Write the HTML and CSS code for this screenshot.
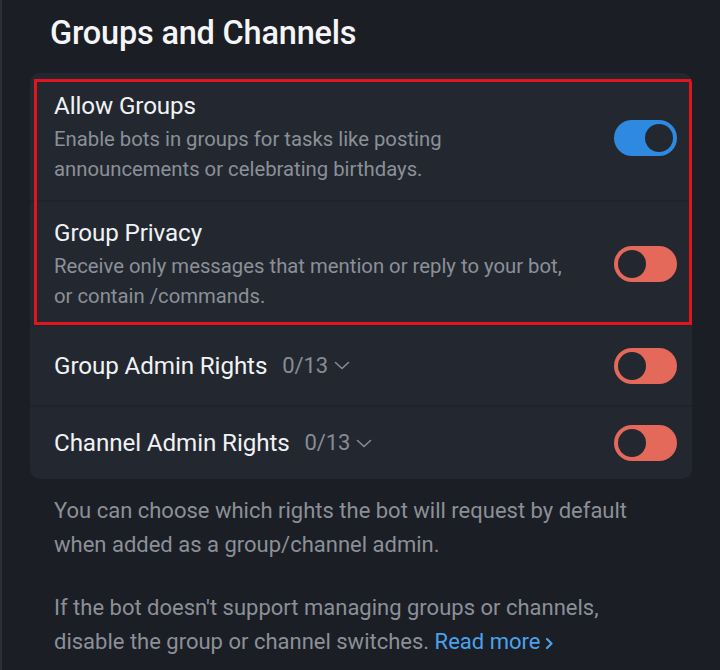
FILE: index.html
```html
<!DOCTYPE html>
<html lang="en">
<head>
<meta charset="utf-8">
<title>Groups and Channels</title>
<link rel="stylesheet" href="styles.css">
</head>
<body>
<main class="page">
  <h1 class="title">Groups and Channels</h1>
  <section class="card">
    <div class="highlight">
      <div class="row row-desc">
        <div class="text">
          <div class="label">Allow Groups</div>
          <div class="desc">Enable bots in groups for tasks like posting<br>announcements or celebrating birthdays.</div>
        </div>
        <span class="toggle on"><span class="knob"></span></span>
      </div>
      <div class="row row-desc">
        <div class="text">
          <div class="label">Group Privacy</div>
          <div class="desc">Receive only messages that mention or reply to your bot,<br>or contain /commands.</div>
        </div>
        <span class="toggle off"><span class="knob"></span></span>
      </div>
    </div>
    <div class="row row-simple">
      <div class="label">Group Admin Rights <span class="count">0/13<svg class="chev" viewBox="0 0 16 9" width="16" height="9"><path d="M1.5 1.5 L8 7.5 L14.5 1.5" fill="none" stroke="currentColor" stroke-width="1.6" stroke-linecap="round" stroke-linejoin="round"/></svg></span></div>
      <span class="toggle off"><span class="knob"></span></span>
    </div>
    <div class="row row-simple last">
      <div class="label">Channel Admin Rights <span class="count">0/13<svg class="chev" viewBox="0 0 16 9" width="16" height="9"><path d="M1.5 1.5 L8 7.5 L14.5 1.5" fill="none" stroke="currentColor" stroke-width="1.6" stroke-linecap="round" stroke-linejoin="round"/></svg></span></div>
      <span class="toggle off"><span class="knob"></span></span>
    </div>
  </section>
  <p class="note">You can choose which rights the bot will request by default<br>when added as a group/channel admin.</p>
  <p class="note">If the bot doesn't support managing groups or channels,<br>disable the group or channel switches. <a class="link" href="#">Read more<svg class="more" viewBox="0 0 8 12" width="8" height="13"><path d="M2 1.5 L6.5 6 L2 10.5" fill="none" stroke="currentColor" stroke-width="2.2" stroke-linecap="round" stroke-linejoin="round"/></svg></a></p>
</main>
</body>
</html>
```
FILE: styles.css
```css
html, body {
  margin: 0;
  padding: 0;
  background: #1b1e24;
}
body {
  font-family: Roboto, "Liberation Sans", sans-serif;
  color: #eef0f2;
  width: 720px;
  height: 670px;
  overflow: hidden;
}
.page {
  border-left: 2px solid #2c3036;
  padding: 0 28px 0 28px;
  height: 670px;
  box-sizing: border-box;
}
.title {
  margin: 0;
  padding: 13px 0 0 20px;
  height: 73px;
  box-sizing: border-box;
  font-size: 32.5px;
  line-height: 40px;
  font-weight: 500;
  color: #f4f5f7;
  letter-spacing: -0.2px;
}
.card {
  background: #1f232a;
  border-radius: 10px;
  overflow: hidden;
  display: flex;
  flex-direction: column;
  gap: 2px;
}
.highlight {
  position: relative;
  display: flex;
  flex-direction: column;
  gap: 2px;
}
.highlight::after {
  content: "";
  position: absolute;
  left: 4px;
  right: 0;
  top: 6px;
  bottom: -1px;
  border: 3px solid #e3151c;
  pointer-events: none;
}
.row {
  background: #232830;
  display: flex;
  align-items: center;
  justify-content: space-between;
  padding: 0 15px 0 24px;
}
.row-desc {
  height: 127px;
  box-sizing: border-box;
  padding-top: 18px;
  padding-bottom: 16px;
}
.row-desc:nth-child(2) {
  height: 122px;
}
.row-simple {
  height: 79px;
}
.row-simple.last {
  height: 72px;
}
.label {
  font-size: 24.2px;
  line-height: 30px;
  color: #f1f2f4;
  letter-spacing: -0.1px;
  display: flex;
  align-items: center;
}
.desc {
  margin-top: 3px;
  font-size: 20.3px;
  line-height: 30px;
  color: #8b9098;
}
.count {
  margin-left: 15px;
  color: #878c94;
  font-size: 22px;
  display: inline-flex;
  align-items: center;
}
.chev {
  margin-left: 6px;
  color: #878c94;
}
.toggle {
  flex: none;
  width: 63px;
  height: 36px;
  border-radius: 18px;
  box-sizing: border-box;
  padding: 4px;
  display: flex;
}
.toggle.on {
  background: #2e8ae0;
  justify-content: flex-end;
}
.toggle.off {
  background: #e4695a;
  justify-content: flex-start;
}
.knob {
  width: 28px;
  height: 28px;
  border-radius: 50%;
  background: #232830;
}
.note {
  margin: 15px 0 0 24px;
  font-size: 22px;
  line-height: 34px;
  color: #8b9098;
}
.note + .note {
  margin-top: 29px;
}
.link {
  color: #4aa2ee;
  text-decoration: none;
}
.more {
  margin-left: 5px;
  vertical-align: -1px;
}
```
